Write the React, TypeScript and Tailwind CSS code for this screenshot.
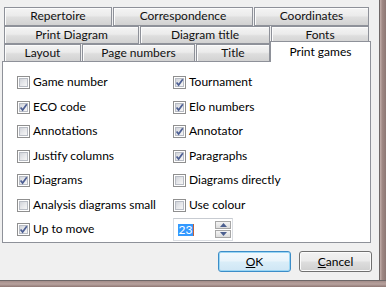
import React from "react";

const font = { fontFamily: "Lato, 'Noto Sans', sans-serif" };

function Tab({ label, w, h, noBottom }: { label: string; w: number; h: number; noBottom?: boolean }) {
  return (
    <div
      className={`flex items-center justify-center border-[#8e9199] border-t border-l border-r ${noBottom ? "" : "border-b"} bg-[linear-gradient(#f4f4f4_0%,#ebebeb_45%,#dedede_55%,#d2d2d2_100%)] shadow-[inset_1px_1px_0_#fcfcfc] text-[12px] text-[#111] leading-none`}
      style={{ width: w, height: h }}
    >
      <span className="-mt-[1px]">{label}</span>
    </div>
  );
}

function CheckBox({ checked }: { checked: boolean }) {
  return (
    <div className="w-[13px] h-[13px] border border-[#8f8f8f] bg-white p-[1px] shrink-0">
      <div className="relative w-full h-full border border-[#b8bcc4] bg-[linear-gradient(135deg,#d1d4da_0%,#e6e7ea_50%,#f6f6f6_100%)]">
        {checked && (
          <svg viewBox="0 0 9 9" className="absolute -left-[1px] -top-[1px] w-[9px] h-[9px]">
            <path d="M1.6 4.4 L3.6 7 L7.8 1.2" fill="none" stroke="#4d5f94" strokeWidth="1.7" strokeLinejoin="miter" />
          </svg>
        )}
      </div>
    </div>
  );
}

function Item({ label, checked }: { label: string; checked: boolean }) {
  return (
    <div className="flex items-center gap-[3px] h-[24.5px]">
      <CheckBox checked={checked} />
      <span className="text-[12px] text-black leading-none -mt-[1px]">{label}</span>
    </div>
  );
}

function Button({ children, def }: { children: React.ReactNode; def?: boolean }) {
  return (
    <div
      className={`w-[73px] h-[21px] rounded-[3px] border flex items-center justify-center text-[12px] text-black ${
        def
          ? "border-[#3c8dc8] bg-[linear-gradient(#f2f9fd_0%,#e9f4fb_45%,#d9edf8_55%,#cfe6f5_100%)] shadow-[inset_0_0_0_1px_#9ad6f4]"
          : "border-[#707070] bg-[linear-gradient(#f2f2f2_0%,#ebebeb_45%,#dddddd_55%,#cfcfcf_100%)] shadow-[inset_0_0_0_1px_#fbfbfb]"
      }`}
    >
      {children}
    </div>
  );
}

export default function App() {
  const left = [
    ["Game number", false],
    ["ECO code", true],
    ["Annotations", false],
    ["Justify columns", false],
    ["Diagrams", true],
    ["Analysis diagrams small", false],
    ["Up to move", true],
  ] as const;
  const right = [
    ["Tournament", true],
    ["Elo numbers", true],
    ["Annotator", true],
    ["Paragraphs", true],
    ["Diagrams directly", false],
    ["Use colour", false],
  ] as const;

  return (
    <div className="w-[386px] h-[287px] flex flex-col overflow-hidden" style={font}>
      <div className="flex h-[280px]">
        <div className="w-[379px] h-full bg-[#f0f0f0] flex flex-col pt-[7px]">
          {/* tab rows */}
          <div className="flex gap-[1px] pl-[4px]">
            <Tab label="Repertoire" w={108} h={19} />
            <Tab label="Correspondence" w={140} h={19} />
            <Tab label="Coordinates" w={115} h={19} />
          </div>
          <div className="flex gap-[1px] pl-[4px]">
            <Tab label="Print Diagram" w={135} h={18} />
            <Tab label="Diagram title" w={130} h={18} />
            <Tab label="Fonts" w={98} h={18} />
          </div>
          <div className="flex items-end pl-[4px] h-[17px]">
            <Tab label="Layout" w={77} h={17} noBottom />
            <div className="w-[1px]" />
            <Tab label="Page numbers" w={113} h={17} noBottom />
            <div className="w-[1px]" />
            <Tab label="Title" w={74} h={17} noBottom />
            <div className="relative z-10 w-[101px] h-[21px] -mb-[1px] bg-white border-t border-l border-r border-[#8e9199] flex justify-center pt-[3px] text-[12px] text-black leading-none">
              <span className="mt-[1px]">Print games</span>
            </div>
          </div>
          {/* panel */}
          <div className="ml-[2px] w-[369px] h-[182px] bg-white border border-[#8e9199] pl-[14px] pt-[8.5px] flex">
            <div className="w-[156px] flex flex-col">
              {left.map(([l, c]) => (
                <Item key={l} label={l} checked={c} />
              ))}
            </div>
            <div className="flex flex-col">
              {right.map(([l, c]) => (
                <Item key={l} label={l} checked={c} />
              ))}
              <div className="h-[24.5px] flex items-center">
                <div className="w-[60px] h-[23px] border border-[#dadde2] border-t-[#c7cbd1] bg-white flex items-center">
                  <div className="flex-1 flex items-center pl-[4px]">
                    <span className="bg-[#3399ff] text-white text-[12px] leading-[12px] h-[12px] px-[0.5px]">23</span>
                    <span className="w-[1px] h-[12px] bg-[#c0603a]" />
                  </div>
                  <div className="flex flex-col gap-[1px] pr-[1px]">
                    <div className="w-[16px] h-[8px] border border-[#a6a6a6] bg-[linear-gradient(#f4f4f4,#dcdcdc)] flex items-center justify-center">
                      <svg viewBox="0 0 7 4" className="w-[7px] h-[4px]"><path d="M0 4 L3.5 0 L7 4 Z" fill="#4c5f8f" /></svg>
                    </div>
                    <div className="w-[16px] h-[8px] border border-[#a6a6a6] bg-[linear-gradient(#f4f4f4,#dcdcdc)] flex items-center justify-center">
                      <svg viewBox="0 0 7 4" className="w-[7px] h-[4px]"><path d="M0 0 L3.5 4 L7 0 Z" fill="#4c5f8f" /></svg>
                    </div>
                  </div>
                </div>
              </div>
            </div>
          </div>
          {/* buttons */}
          <div className="flex justify-end gap-[8px] pr-[7px] mt-[8px]">
            <Button def>
              <span><span className="underline">O</span>K</span>
            </Button>
            <Button>
              <span><span className="underline">C</span>ancel</span>
            </Button>
          </div>
        </div>
        <div className="w-[1px] h-full bg-[#6e6868]" />
        <div className="flex-1 h-full bg-[linear-gradient(90deg,#c4afab,#9f8884_40%,#8d7774)]" />
      </div>
      <div className="h-[1px] bg-[#6e6868]" />
      <div className="flex-1 bg-[linear-gradient(#a38c88,#b7a29e_50%,#8f7773)]" />
    </div>
  );
}
